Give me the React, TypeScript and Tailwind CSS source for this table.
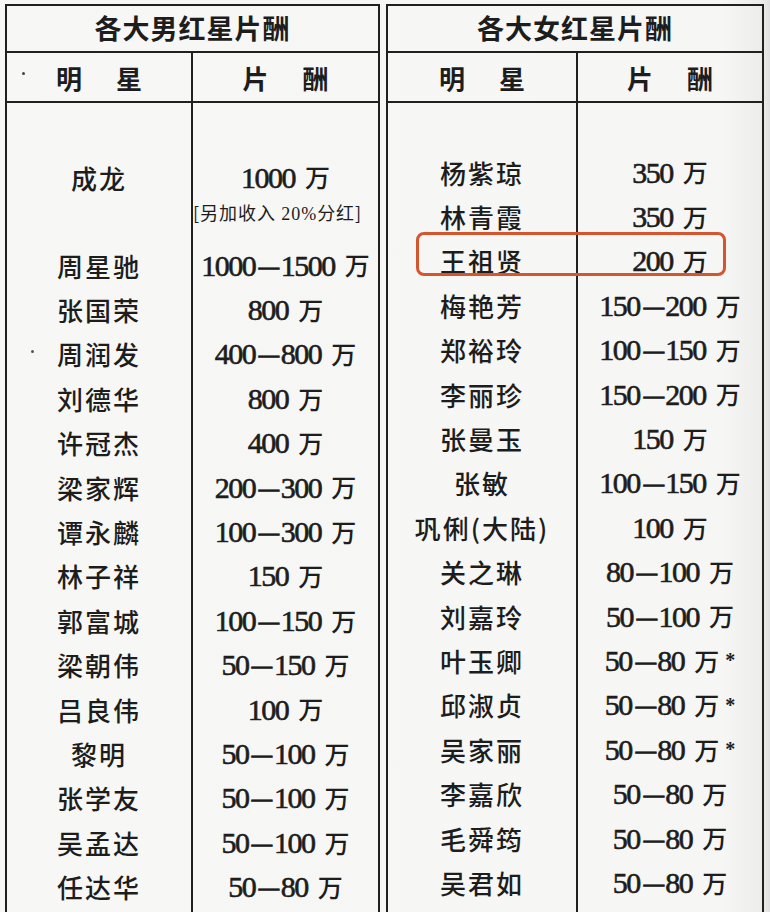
const men: [string, string][] = [
  ["周星驰", "1000–1500"],
  ["张国荣", "800"],
  ["周润发", "400–800"],
  ["刘德华", "800"],
  ["许冠杰", "400"],
  ["梁家辉", "200–300"],
  ["谭永麟", "100–300"],
  ["林子祥", "150"],
  ["郭富城", "100–150"],
  ["梁朝伟", "50–150"],
  ["吕良伟", "100"],
  ["黎明", "50–100"],
  ["张学友", "50–100"],
  ["吴孟达", "50–100"],
  ["任达华", "50–80"],
];

const women: [string, string, boolean?][] = [
  ["杨紫琼", "350"],
  ["林青霞", "350"],
  ["王祖贤", "200"],
  ["梅艳芳", "150–200"],
  ["郑裕玲", "100–150"],
  ["李丽珍", "150–200"],
  ["张曼玉", "150"],
  ["张敏", "100–150"],
  ["巩俐(大陆)", "100"],
  ["关之琳", "80–100"],
  ["刘嘉玲", "50–100"],
  ["叶玉卿", "50–80", true],
  ["邱淑贞", "50–80", true],
  ["吴家丽", "50–80", true],
  ["李嘉欣", "50–80"],
  ["毛舜筠", "50–80"],
  ["吴君如", "50–80"],
];

const cjk = "font-['Noto_Sans_CJK_SC',sans-serif]";
const num = "font-['Liberation_Serif','Noto_Sans_CJK_SC',serif]";
const line = "border-[#202020]";

function Name({ children, h = "h-[44.4px]" }: { children: React.ReactNode; h?: string }) {
  return (
    <div className={`${h} flex items-center justify-center text-[26px] tracking-[2px] font-medium ${cjk}`}>
      {children}
    </div>
  );
}

function Value({ v, star, h = "h-[44.4px]" }: { v: string; star?: boolean; h?: string }) {
  const [a, b] = v.split("–");
  return (
    <div className={`${h} flex items-center justify-center whitespace-nowrap`}>
      <span className={`text-[30px] tracking-[-1.5px] [-webkit-text-stroke:0.6px_#1d1d1d] ${num}`}>
        {a}
        {b && (
          <>
            <span className="inline-block mx-[6px] scale-x-[1.35]">–</span>
            {b}
          </>
        )}
      </span>
      <span className={`ml-[10px] text-[25px] font-medium ${cjk}`}>万</span>
      {star && <span className={`ml-[6px] text-[20px] font-bold ${num}`}>*</span>}
    </div>
  );
}

function SubHead({ first }: { first: string }) {
  return (
    <div className={`h-[50px] flex border-b-2 ${line} text-[26px] font-bold ${cjk}`}>
      <div className={`${first} border-r-2 ${line} flex items-center justify-center gap-[34px]`}>
        <span>明</span>
        <span>星</span>
      </div>
      <div className="flex-1 flex items-center justify-center gap-[34px]">
        <span>片</span>
        <span>酬</span>
      </div>
    </div>
  );
}

function Title({ children }: { children: React.ReactNode }) {
  return (
    <div className={`h-[47px] flex items-center justify-center border-b-2 ${line} text-[27px] font-bold tracking-[1px] ${cjk}`}>
      {children}
    </div>
  );
}

export default function App() {
  return (
    <div className="relative w-[770px] h-[912px] overflow-hidden text-[#1d1d1d] bg-[linear-gradient(90deg,#f7f7f5_0%,#f6f6f4_94%,#ececea_99%,#e0e0e0_100%)]">
      <div className="flex pt-[4px] pl-[5px]">
        {/* men */}
        <div className={`w-[375px] h-[960px] flex flex-col border-l-2 border-t-2 border-r-2 ${line}`}>
          <Title>各大男红星片酬</Title>
          <SubHead first="w-[186px]" />
          <div className="flex flex-1">
            <div className={`w-[186px] border-r-2 ${line} pt-[54px]`}>
              <Name h="h-[40px]">成龙</Name>
              <div className="h-[46px]" />
              {men.map(([n]) => (
                <Name key={n}>{n}</Name>
              ))}
            </div>
            <div className="flex-1 pt-[54px]">
              <Value v="1000" h="h-[40px]" />
              <div className={`h-[46px] pt-[4px] leading-[22px] text-[18px] tracking-[1px] whitespace-nowrap ${cjk}`}>
                [另加收入 <span className={num}>20%</span>分红]
              </div>
              {men.map(([n, v]) => (
                <Value key={n} v={v} />
              ))}
            </div>
          </div>
        </div>

        <div className="w-[6px]" />

        {/* women */}
        <div className={`w-[378px] h-[960px] flex flex-col border-l-2 border-t-2 border-r-2 ${line}`}>
          <Title>各大女红星片酬</Title>
          <SubHead first="w-[190px]" />
          <div className="flex flex-1">
            <div className={`w-[190px] border-r-2 ${line} pt-[47px]`}>
              {women.map(([n]) => (
                <Name key={n}>{n}</Name>
              ))}
            </div>
            <div className="flex-1 pt-[47px]">
              {women.map(([n, v, s]) => (
                <Value key={n} v={v} star={s} />
              ))}
            </div>
          </div>
        </div>
      </div>

      {/* highlight around 王祖贤 */}
      <div className="absolute left-[416px] top-[232px] w-[310px] h-[44px] rounded-[8px] border-[3px] border-[#d4552e]" />

      {/* scan specks */}
      <div className="absolute left-[22px] top-[72px] w-[3px] h-[3px] rounded-full bg-[#444]" />
      <div className="absolute left-[31px] top-[350px] w-[3px] h-[3px] rounded-full bg-[#555]" />
    </div>
  );
}
